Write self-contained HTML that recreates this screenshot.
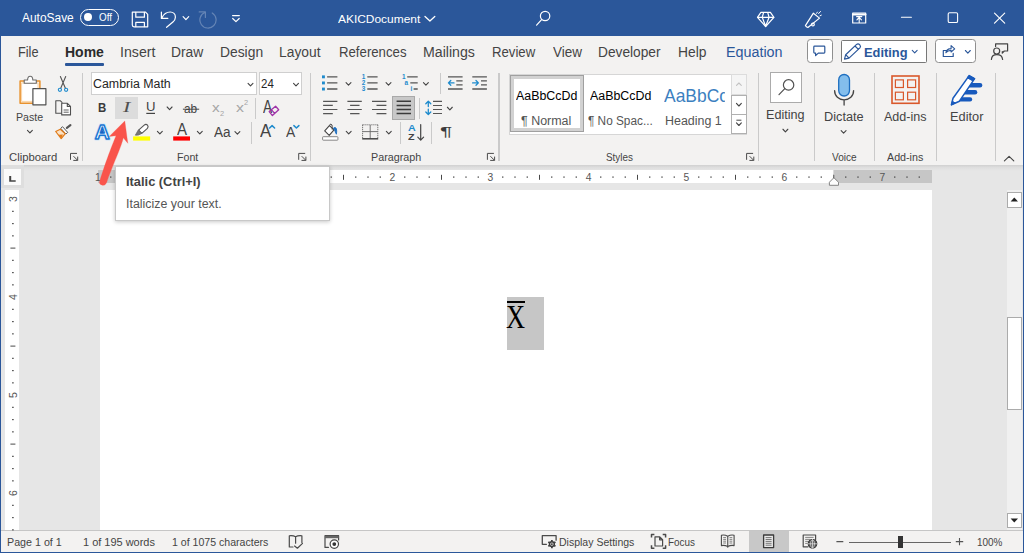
<!DOCTYPE html>
<html lang="en"><head><meta charset="utf-8"><title>AKICDocument - Word</title>
<style>
html,body{margin:0;padding:0;}
body{width:1024px;height:553px;overflow:hidden;position:relative;background:#e6e6e6;font-family:"Liberation Sans",sans-serif;}
.a{position:absolute;box-sizing:border-box;}
.t{position:absolute;white-space:nowrap;line-height:1;display:block;z-index:3;}
.z5{z-index:7;}
#titlebar{left:0;top:0;width:1024px;height:36px;background:#2b579a;}
#toggle{left:80.1px;top:8.9px;width:39px;height:16.7px;border:1.2px solid #fff;border-radius:9px;}
#knob{left:3.1px;top:3.1px;width:7.8px;height:7.8px;border-radius:50%;background:#fff;}
#tabs{left:0;top:36px;width:1024px;height:32px;background:#f3f2f1;}
#homeul{left:64.5px;top:27px;width:39.3px;height:3px;background:#2b579a;border-radius:1px;}
.btn{top:3.4px;height:24px;background:#fff;border:1px solid #8f8f8f;border-radius:3.5px;}
#btnComment{left:807px;width:25.5px;}
#btnEditing{left:840.8px;width:86.3px;top:4.1px;height:23.3px;border-color:#777;border-radius:1.5px;}
#btnShare{left:935.3px;width:41px;}
#ribbon{left:0;top:68px;width:1024px;height:96.7px;background:#f3f2f1;}
.box{background:#fff;border:1px solid #cfcfcf;top:4.3px;height:23.2px;}
#fontname{left:91px;width:165.5px;}
#fontsize{left:258.8px;width:43.4px;}
#italicbg{left:115.3px;top:28.8px;width:22.5px;height:22.6px;background:#dcdcdc;}
#justifybg{left:392.2px;top:28.2px;width:23px;height:23.6px;background:#c8c8c8;border:1px solid #a9a9a9;}
#gallery{left:508.8px;top:5.8px;width:238px;height:61px;background:#fff;border:1px solid #d6d6d6;}
#normalsel{left:0.5px;top:0.5px;width:73.3px;height:57px;border:1px solid #a0a0a0;box-shadow:inset 0 0 0 3px #d2d2d2;background:#fff;}
.gbtn{left:221.5px;width:15.5px;background:#fff;border:1px solid #b0b0b0;}
#gup{top:-0.5px;height:21px;background:#f5f5f5;border-color:#dcdcdc;}
#gdown{top:20px;height:20px;}
#gmore{top:39.5px;height:20px;}
#findbox{left:770.1px;top:4.1px;width:32.3px;height:31px;background:#fff;border:1px solid #ababab;}
.sep{position:absolute;width:1.2px;background:#cacaca;}
#ribshadow{left:0;top:164.7px;width:1024px;height:6.5px;background:linear-gradient(#d0d0d0,#dfdfdf 45%,#e6e6e6);z-index:1;}
#work{left:0;top:165px;width:1024px;height:365px;background:#e6e6e6;}
#hruler{left:98px;top:170.1px;width:833.5px;height:13px;background:#fff;z-index:2;}
#hrL{left:0;top:0;width:98.5px;height:13px;background:#c6c6c6;}
#hrR{left:735px;top:0;width:98.5px;height:13px;background:linear-gradient(90deg,#dcdcdc 0,#dcdcdc 1.2px,#c6c6c6 1.2px);}
#cornerbg{left:1.3px;top:165px;width:23.2px;height:23px;background:#dedede;z-index:2;}
#corner{left:4px;top:169px;width:16.9px;height:15.9px;background:#fafafa;z-index:2;}
#vruler{left:5.2px;top:190.2px;width:13.7px;height:340px;background:#fff;}
#page{left:100px;top:190.2px;width:831.5px;height:340px;background:#fff;}
#selection{left:506.8px;top:296.6px;width:37.3px;height:53px;background:#c6c6c6;}
#overbar{left:507px;top:301.4px;width:18.3px;height:1.8px;background:#000;z-index:4;}
#vscroll{left:1006.6px;top:190.2px;width:15.6px;height:340px;background:#f0f0f0;}
.sbtn{left:0;width:15.4px;height:15.7px;background:#fff;border:1px solid #ababab;}
#sup{top:1.8px;}
#sdown{top:322.6px;}
#sthumb{left:0;top:127.3px;width:15.4px;height:92.7px;background:#fff;border:1px solid #ababab;}
#tooltip{left:115.3px;top:166.2px;width:215px;height:54.8px;background:#fff;border:1px solid #c8c8c8;box-shadow:0 1px 4px rgba(0,0,0,.22);z-index:6;}
#status{left:0;top:530px;width:1024px;height:22px;background:#f3f2f1;border-top:1px solid #c6c6c6;}
#viewsel{left:749.3px;top:0;width:39.8px;height:21px;background:#c8c8c8;}
#zline{left:849px;top:10.6px;width:102px;height:1px;background:#666;}
#zthumb{left:898px;top:4.6px;width:4.8px;height:12px;background:#333;}
#frameL{left:0;top:36px;width:1.3px;height:517px;background:#2b579a;z-index:9;}
#frameR{left:1022.7px;top:36px;width:1.3px;height:517px;background:#2b579a;z-index:9;}
#frameB{left:0;top:551.5px;width:1024px;height:1.5px;background:#2b579a;z-index:9;}
svg{position:absolute;left:0;top:0;overflow:visible;z-index:4;}
svg.top{z-index:8;}

</style></head>
<body>
<div class="a" id="titlebar">
  <div class="a" id="toggle"><div class="a" id="knob"></div></div>
</div>
<div class="a" id="tabs">
  <div class="a" id="homeul"></div>
  <div class="a btn" id="btnComment"></div>
  <div class="a btn" id="btnEditing"></div>
  <div class="a btn" id="btnShare"></div>
</div>
<div class="a" id="ribbon">
  <div class="a box" id="fontname"></div>
  <div class="a box" id="fontsize"></div>
  <div class="a" id="italicbg"></div>
  <div class="a" id="justifybg"></div>
  <div class="a" id="gallery">
    <div class="a" id="normalsel"></div>
    <div class="a gbtn" id="gup"></div>
    <div class="a gbtn" id="gdown"></div>
    <div class="a gbtn" id="gmore"></div>
  </div>
  <div class="a" id="findbox"></div>
  <div class="sep" style="left:82px;top:4.5px;height:88px"></div>
  <div class="sep" style="left:255.3px;top:30px;height:21px"></div>
  <div class="sep" style="left:251.2px;top:54px;height:21.5px"></div>
  <div class="sep" style="left:310.2px;top:4.5px;height:88px"></div>
  <div class="sep" style="left:440px;top:5px;height:21px"></div>
  <div class="sep" style="left:418.6px;top:30px;height:21px"></div>
  <div class="sep" style="left:400.2px;top:54px;height:21.5px"></div>
  <div class="sep" style="left:431.2px;top:54px;height:21.5px"></div>
  <div class="sep" style="left:498.4px;top:4.5px;height:88px"></div>
  <div class="sep" style="left:757.8px;top:4.5px;height:88px"></div>
  <div class="sep" style="left:814.2px;top:4.5px;height:88px"></div>
  <div class="sep" style="left:873.6px;top:4.5px;height:88px"></div>
  <div class="sep" style="left:936.2px;top:4.5px;height:88px"></div>
  <div class="sep" style="left:995.1px;top:4.5px;height:88px"></div>
</div>
<div class="a" id="ribshadow"></div>
<div class="a" id="work"></div>
<div class="a" id="hruler"><div class="a" id="hrL"></div><div class="a" id="hrR"></div></div>
<div class="a" id="cornerbg"></div>
<div class="a" id="corner"></div>
<div class="a" id="vruler"></div>
<div class="a" id="page"></div>
<div class="a" id="selection"></div>
<div class="a" id="overbar"></div>
<div class="a" id="vscroll">
  <div class="a sbtn" id="sup"></div>
  <div class="a" id="sthumb"></div>
  <div class="a sbtn" id="sdown"></div>
</div>
<div class="a" id="tooltip"></div>
<div class="a" id="status">
  <div class="a" id="viewsel"></div>
  <div class="a" id="zline"></div>
  <div class="a" id="zthumb"></div>
</div>
<div class="a" id="frameL"></div><div class="a" id="frameR"></div><div class="a" id="frameB"></div>
<span class="t" style="left:22.34px;top:11.54px;font-size:12px;color:#fff;transform:scaleX(0.9945);transform-origin:0 0;">AutoSave</span>
<span class="t" style="left:99.09px;top:13.48px;font-size:10.3px;color:#fff;transform:scaleX(0.9565);transform-origin:0 0;">Off</span>
<span class="t" style="left:337.54px;top:14.41px;font-size:11.8px;color:#fff;transform:scaleX(1.0114);transform-origin:0 0;">AKICDocument</span>
<span class="t" style="left:17.90px;top:45.45px;font-size:14px;color:#444;transform:scaleX(0.9090);transform-origin:0 0;">File</span>
<span class="t" style="left:64.90px;top:45.45px;font-size:14px;color:#2b2b2b;font-weight:700;transform:scaleX(0.9996);transform-origin:0 0;">Home</span>
<span class="t" style="left:119.52px;top:45.45px;font-size:14px;color:#444;transform:scaleX(1.0118);transform-origin:0 0;">Insert</span>
<span class="t" style="left:171.07px;top:45.45px;font-size:14px;color:#444;transform:scaleX(0.9896);transform-origin:0 0;">Draw</span>
<span class="t" style="left:220.17px;top:45.45px;font-size:14px;color:#444;transform:scaleX(0.9884);transform-origin:0 0;">Design</span>
<span class="t" style="left:279.07px;top:45.45px;font-size:14px;color:#444;transform:scaleX(0.9876);transform-origin:0 0;">Layout</span>
<span class="t" style="left:338.92px;top:45.45px;font-size:14px;color:#444;transform:scaleX(0.9429);transform-origin:0 0;">References</span>
<span class="t" style="left:423.15px;top:45.45px;font-size:14px;color:#444;transform:scaleX(1.0116);transform-origin:0 0;">Mailings</span>
<span class="t" style="left:492.22px;top:45.45px;font-size:14px;color:#444;transform:scaleX(0.9417);transform-origin:0 0;">Review</span>
<span class="t" style="left:553.43px;top:45.45px;font-size:14px;color:#444;transform:scaleX(0.9632);transform-origin:0 0;">View</span>
<span class="t" style="left:598.48px;top:45.45px;font-size:14px;color:#444;transform:scaleX(0.9802);transform-origin:0 0;">Developer</span>
<span class="t" style="left:678.07px;top:45.45px;font-size:14px;color:#444;transform:scaleX(0.9871);transform-origin:0 0;">Help</span>
<span class="t" style="left:725.94px;top:45.45px;font-size:14px;color:#2b579a;transform:scaleX(1.0222);transform-origin:0 0;">Equation</span>
<span class="t" style="left:863.68px;top:45.70px;font-size:13px;color:#2b579a;font-weight:700;transform:scaleX(0.9885);transform-origin:0 0;">Editing</span>
<span class="t" style="left:16.41px;top:111.95px;font-size:11.4px;color:#444;transform:scaleX(0.9337);transform-origin:0 0;">Paste</span>
<span class="t" style="left:8.66px;top:152.98px;font-size:10.3px;color:#444;transform:scaleX(1.0980);transform-origin:0 0;">Clipboard</span>
<span class="t" style="left:92.72px;top:78.22px;font-size:12.5px;color:#262626;transform:scaleX(0.9904);transform-origin:0 0;">Cambria Math</span>
<span class="t" style="left:260.79px;top:78.22px;font-size:12.5px;color:#262626;transform:scaleX(0.9206);transform-origin:0 0;">24</span>
<span class="t" style="left:98.08px;top:101.43px;font-size:13.2px;color:#3b3b3b;font-weight:700;transform:scaleX(0.8689);transform-origin:0 0;">B</span>
<span class="t" style="left:122.58px;top:100.41px;font-size:14.8px;color:#505050;font-family:'Liberation Serif', serif;transform:scaleX(1.4838);transform-origin:0 0;font-style:italic;">I</span>
<span class="t" style="left:146.18px;top:101.33px;font-size:12.6px;color:#444;transform:scaleX(1.0444);transform-origin:0 0;">U</span>
<span class="t" style="left:184.33px;top:101.70px;font-size:13px;color:#444;transform:scaleX(0.9104);transform-origin:0 0;">ab</span>
<span class="t" style="left:212.05px;top:100.77px;font-size:13.5px;color:#a6a6a6;transform:scaleX(1.1418);transform-origin:0 0;">x</span>
<span class="t" style="left:219.71px;top:110.61px;font-size:6.6px;color:#a6a6a6;transform:scaleX(1.1286);transform-origin:0 0;">2</span>
<span class="t" style="left:236.23px;top:100.77px;font-size:13.5px;color:#a6a6a6;transform:scaleX(1.1764);transform-origin:0 0;">x</span>
<span class="t" style="left:244.31px;top:100.41px;font-size:6.6px;color:#a6a6a6;transform:scaleX(1.1286);transform-origin:0 0;">2</span>
<span class="t" style="left:262.73px;top:98.68px;font-size:17.8px;color:#444;transform:scaleX(0.7707);transform-origin:0 0;">A</span>
<span class="t" style="left:177.34px;top:121.79px;font-size:15.6px;color:#444;transform:scaleX(0.9652);transform-origin:0 0;">A</span>
<span class="t" style="left:213.84px;top:124.55px;font-size:14px;color:#444;transform:scaleX(0.9700);transform-origin:0 0;">Aa</span>
<span class="t" style="left:259.54px;top:123.42px;font-size:17.7px;color:#444;transform:scaleX(0.9454);transform-origin:0 0;">A</span>
<span class="t" style="left:285.54px;top:124.55px;font-size:14px;color:#444;transform:scaleX(0.9899);transform-origin:0 0;">A</span>
<span class="t" style="left:176.67px;top:152.98px;font-size:10.3px;color:#444;transform:scaleX(1.0326);transform-origin:0 0;">Font</span>
<span class="t" style="left:407.71px;top:124.38px;font-size:9px;color:#1e8bcd;font-weight:700;transform:scaleX(1.1883);transform-origin:0 0;">A</span>
<span class="t" style="left:408.24px;top:132.68px;font-size:9px;color:#444;font-weight:700;transform:scaleX(1.1921);transform-origin:0 0;">Z</span>
<span class="t" style="left:440.05px;top:124.70px;font-size:13px;color:#3b3b3b;transform:scaleX(1.7562);transform-origin:0 0;">¶</span>
<span class="t" style="left:370.86px;top:152.98px;font-size:10.3px;color:#444;transform:scaleX(1.0454);transform-origin:0 0;">Paragraph</span>
<span class="t" style="left:516.44px;top:90.34px;font-size:12px;color:#000;transform:scaleX(1.0327);transform-origin:0 0;">AaBbCcDd</span>
<span class="t" style="left:520.95px;top:114.64px;font-size:12px;color:#555;transform:scaleX(1.0379);transform-origin:0 0;">¶ Normal</span>
<span class="t" style="left:589.84px;top:90.34px;font-size:12px;color:#000;transform:scaleX(1.0327);transform-origin:0 0;">AaBbCcDd</span>
<span class="t" style="left:588.08px;top:114.64px;font-size:12px;color:#555;transform:scaleX(0.9839);transform-origin:0 0;">¶ No Spac...</span>
<span class="t" style="left:663.64px;top:86.56px;font-size:18.6px;color:#3c7fbf;transform:scaleX(0.9388);transform-origin:0 0;clip-path:inset(0 3.4px 0 0);">AaBbCc</span>
<span class="t" style="left:664.68px;top:114.64px;font-size:12px;color:#555;transform:scaleX(1.0382);transform-origin:0 0;">Heading 1</span>
<span class="t" style="left:606.11px;top:152.98px;font-size:10.3px;color:#444;transform:scaleX(0.9621);transform-origin:0 0;">Styles</span>
<span class="t" style="left:766.27px;top:108.64px;font-size:12px;color:#444;transform:scaleX(1.0517);transform-origin:0 0;">Editing</span>
<span class="t" style="left:824.16px;top:110.54px;font-size:12px;color:#444;transform:scaleX(1.0603);transform-origin:0 0;">Dictate</span>
<span class="t" style="left:831.64px;top:152.98px;font-size:10.3px;color:#444;transform:scaleX(0.9799);transform-origin:0 0;">Voice</span>
<span class="t" style="left:884.44px;top:110.54px;font-size:12px;color:#444;transform:scaleX(1.0448);transform-origin:0 0;">Add-ins</span>
<span class="t" style="left:887.04px;top:152.98px;font-size:10.3px;color:#444;transform:scaleX(1.0386);transform-origin:0 0;">Add-ins</span>
<span class="t" style="left:949.76px;top:110.54px;font-size:12px;color:#444;transform:scaleX(1.0659);transform-origin:0 0;">Editor</span>
<span class="t z5" style="left:126.48px;top:176.44px;font-size:12px;color:#444;font-weight:700;transform:scaleX(1.0703);transform-origin:0 0;">Italic (Ctrl+I)</span>
<span class="t z5" style="left:126.34px;top:198.44px;font-size:12px;color:#555;transform:scaleX(1.0321);transform-origin:0 0;">Italicize your text.</span>
<span class="t" style="left:389.49px;top:172.88px;font-size:10.3px;color:#555;">2</span>
<span class="t" style="left:487.41px;top:172.88px;font-size:10.3px;color:#555;">3</span>
<span class="t" style="left:585.73px;top:172.88px;font-size:10.3px;color:#555;">4</span>
<span class="t" style="left:683.40px;top:172.88px;font-size:10.3px;color:#555;">5</span>
<span class="t" style="left:781.44px;top:172.88px;font-size:10.3px;color:#555;">6</span>
<span class="t" style="left:879.41px;top:172.88px;font-size:10.3px;color:#555;">7</span>
<span class="t" style="left:95.06px;top:172.88px;font-size:10.3px;color:#555;">1</span>
<span class="t" style="left:12.95px;top:199.10px;font-size:10.5px;color:#555;transform:translate(-50%,-50%) rotate(-90deg);">3</span>
<span class="t" style="left:12.95px;top:297.20px;font-size:10.5px;color:#555;transform:translate(-50%,-50%) rotate(-90deg);">4</span>
<span class="t" style="left:12.95px;top:395.20px;font-size:10.5px;color:#555;transform:translate(-50%,-50%) rotate(-90deg);">5</span>
<span class="t" style="left:12.95px;top:493.20px;font-size:10.5px;color:#555;transform:translate(-50%,-50%) rotate(-90deg);">6</span>
<span class="t" style="left:7.45px;top:537.15px;font-size:11.4px;color:#444;transform:scaleX(0.9396);transform-origin:0 0;">Page 1 of 1</span>
<span class="t" style="left:83.42px;top:537.15px;font-size:11.4px;color:#444;transform:scaleX(0.9631);transform-origin:0 0;">1 of 195 words</span>
<span class="t" style="left:171.70px;top:537.15px;font-size:11.4px;color:#444;transform:scaleX(0.9283);transform-origin:0 0;">1 of 1075 characters</span>
<span class="t" style="left:558.71px;top:537.15px;font-size:11.4px;color:#444;transform:scaleX(0.9227);transform-origin:0 0;">Display Settings</span>
<span class="t" style="left:668.01px;top:537.15px;font-size:11.4px;color:#444;transform:scaleX(0.8704);transform-origin:0 0;">Focus</span>
<span class="t" style="left:977.22px;top:536.83px;font-size:10.6px;color:#444;transform:scaleX(0.9378);transform-origin:0 0;">100%</span>
<span class="t" style="left:506.38px;top:300.56px;font-size:33px;color:#000;font-family:'Liberation Serif', serif;transform:scaleX(0.7998);transform-origin:0 0;">X</span>
<svg width="100" height="170" viewBox="0 0 100 170" fill="none" stroke-linecap="round" stroke-linejoin="round">
  <!-- paste: clipboard -->
  <rect x="20.1" y="81" width="19.8" height="22.2" fill="#fdf0e0" stroke="#e8912d" stroke-width="1.5"/>
  <rect x="22" y="83" width="16" height="18.4" fill="#fff" stroke="#f8cf9e" stroke-width="0.9"/>
  <path d="M24.2 83.2 V80 H27.6 Q27.7 76.3 30.2 76.3 Q32.7 76.3 32.8 80 H36.3 V83.2 Z" fill="#fff" stroke="#6a6a6a" stroke-width="1.1"/>
  <rect x="32.9" y="88.7" width="13" height="16.1" fill="#fff" stroke="#505050" stroke-width="1.2"/>
  <path d="M27.45 130.35 L29.90 132.90 L32.35 130.35" stroke="#444" stroke-width="1.1" stroke-linecap="round" stroke-linejoin="round" fill="none"/>
  <!-- scissors -->
  <path d="M60.4 76.5 L65.4 88.2 M65.7 76.5 L60.7 88.2" stroke="#555" stroke-width="1.1"/>
  <circle cx="59.9" cy="89.8" r="1.6" stroke="#1e8bcd" stroke-width="1.1"/>
  <circle cx="66.1" cy="89.8" r="1.6" stroke="#1e8bcd" stroke-width="1.1"/>
  <!-- copy -->
  <path d="M61.3 113.2 H55.8 V100.7 H60.2 L62 102.4" stroke="#505050" stroke-width="1.1"/>
  <path d="M61.7 103.3 H67.4 L70.5 106.4 V114.9 H61.7 Z M67.3 103.5 V106.5 H70.3" stroke="#505050" stroke-width="1.1" fill="#fff"/>
  <path d="M64 110 H68.3 M64 112.2 H68.3" stroke="#505050" stroke-width="0.9"/>
  <!-- format painter -->
  <path d="M70.4 125.2 L66.9 127.8" stroke="#555" stroke-width="2.2"/>
  <path d="M62.8 127 L67.7 132.4 L65.9 134 L61 128.6 Z" fill="#fff" stroke="#555" stroke-width="1"/>
  <path d="M60.3 129.3 L55.7 131.5 L61.2 138.6 L65.3 133.7 Z" fill="#fbe3c6" stroke="#e07b1a" stroke-width="1.2"/>
  <path d="M58.6 134.8 L63 134.6 L61.2 138.2 Z" fill="#e07b1a" stroke="none"/>
  <!-- dialog launcher -->
  <path d="M70.50 159.80 V153.40 H77.00 M73.50 156.20 L77.50 160.20 M77.70 156.60 V160.40 H73.30" stroke="#4a4a4a" stroke-width="1" stroke-linecap="butt" stroke-linejoin="miter" fill="none"/>
</svg>
<svg width="320" height="170" viewBox="0 0 320 170" fill="none" stroke="#444" stroke-width="1.2" stroke-linecap="round" stroke-linejoin="round">
  <!-- dropdown chevrons in boxes -->
  <path d="M248.05 83.30 L250.50 85.85 L252.95 83.30" stroke="#444" stroke-width="1.1" stroke-linecap="round" stroke-linejoin="round" fill="none"/>
  <path d="M293.55 83.30 L296.00 85.85 L298.45 83.30" stroke="#444" stroke-width="1.1" stroke-linecap="round" stroke-linejoin="round" fill="none"/>
  <!-- U underline + chevron -->
  <path d="M146.3 113.4 H155" stroke-linecap="butt"/>
  <path d="M167.15 107.00 L169.60 109.55 L172.05 107.00" stroke="#444" stroke-width="1.1" stroke-linecap="round" stroke-linejoin="round" fill="none"/>
  <!-- ab strike -->
  <path d="M182.9 109.2 H199.2" stroke-width="1" stroke-linecap="butt"/>
  <!-- eraser -->
  <path d="M269.2 111.6 L275.6 106.3 L278.7 109.8 L272.4 115.6 Z M271.6 109.8 L274.6 113.4" stroke="#a033a8" stroke-width="1.3"/>
  <!-- text effects A -->
  <text x="102.1" y="138.9" text-anchor="middle" font-family="'Liberation Sans',sans-serif" font-weight="700" font-size="20.6" fill="#fff" stroke="#cfe4f7" stroke-width="3" stroke-linejoin="round">A</text>
  <text x="102.1" y="138.9" text-anchor="middle" font-family="'Liberation Sans',sans-serif" font-weight="700" font-size="20.6" fill="#fff" stroke="#1a76d2" stroke-width="1.5" stroke-linejoin="round">A</text>
  <path d="M100.6 133.2 L102.1 128.6 L103.6 133.2 Z" fill="#1a5fc0" stroke="none"/>
  <!-- highlighter -->
  <path d="M144.2 125.2 Q146 123.6 147.5 125.2 Q148.8 126.8 147.4 128.4 L141.8 133.4 L138.6 130.2 Z" stroke="#555" stroke-width="1.1" fill="#fff"/>
  <path d="M138.6 130.2 L141.8 133.4 L138.4 135 L135.4 135.2 L136.8 132.6 Z" fill="#777" stroke="#666" stroke-width="0.8"/>
  <rect x="133.1" y="136.4" width="17" height="4.2" fill="#ffff00" stroke="none"/>
  <path d="M157.40 131.30 L159.85 133.85 L162.30 131.30" stroke="#444" stroke-width="1.1" stroke-linecap="round" stroke-linejoin="round" fill="none"/>
  <!-- font color bar -->
  <rect x="173.2" y="136.4" width="16.8" height="4.2" fill="#f00" stroke="none"/>
  <path d="M197.35 131.30 L199.80 133.85 L202.25 131.30" stroke="#444" stroke-width="1.1" stroke-linecap="round" stroke-linejoin="round" fill="none"/>
  <!-- Aa chevron -->
  <path d="M234.95 131.55 L237.40 134.10 L239.85 131.55" stroke="#444" stroke-width="1.1" stroke-linecap="round" stroke-linejoin="round" fill="none"/>
  <!-- grow/shrink carets -->
  <path d="M269.6 128 L272.1 125.6 L274.6 128" stroke="#1e8bcd" stroke-width="1.5"/>
  <path d="M293.9 125.6 L296.4 128 L298.9 125.6" stroke="#1e8bcd" stroke-width="1.5"/>
  <!-- launcher -->
  <path d="M298.70 159.80 V153.40 H305.20 M301.70 156.20 L305.70 160.20 M305.90 156.60 V160.40 H301.50" stroke="#4a4a4a" stroke-width="1" stroke-linecap="butt" stroke-linejoin="miter" fill="none"/>
</svg>
<svg width="520" height="170" viewBox="0 0 520 170" fill="none" stroke="#555" stroke-width="1.3" stroke-linecap="butt" stroke-linejoin="round">
  <!-- bullets -->
  <g fill="#1e8bcd" stroke="none"><rect x="322" y="75.4" width="2.9" height="2.9"/><rect x="322" y="81.5" width="2.9" height="2.9"/><rect x="322" y="87.6" width="2.9" height="2.9"/></g>
  <path d="M327.1 76.8 H337.4 M327.1 82.9 H337.4 M327.1 89 H337.4"/>
  <path d="M346.05 82.65 L348.50 85.20 L350.95 82.65" stroke="#444" stroke-width="1.1" stroke-linecap="round" stroke-linejoin="round" fill="none"/>
  <!-- numbering -->
  <g font-family="'Liberation Sans',sans-serif" font-weight="700" font-size="6.4" fill="#1e8bcd" stroke="none">
    <text x="361.8" y="79.1">1</text><text x="361.8" y="85.2">2</text><text x="361.8" y="91.3">3</text>
    <text x="402" y="79.1">1</text><text x="404.6" y="85.2">a</text><text x="410.4" y="91.3">i</text>
  </g>
  <path d="M367.3 76.8 H377.6 M367.3 82.9 H377.6 M367.3 89 H377.6"/>
  <path d="M386.05 82.65 L388.50 85.20 L390.95 82.65" stroke="#444" stroke-width="1.1" stroke-linecap="round" stroke-linejoin="round" fill="none"/>
  <!-- multilevel -->
  <path d="M407.2 76.8 H417.7 M410.3 82.9 H417.7 M413.6 89 H417.7"/>
  <path d="M423.45 82.65 L425.90 85.20 L428.35 82.65" stroke="#444" stroke-width="1.1" stroke-linecap="round" stroke-linejoin="round" fill="none"/>
  <!-- decrease / increase indent -->
  <path d="M448 76.8 H462.6 M456.3 80.8 H462.6 M456.3 84.9 H462.6 M448 89 H462.6"/>
  <path d="M448.6 82.9 H454 M450.8 80.5 L448.4 82.9 L450.8 85.3" stroke="#1e8bcd" stroke-width="1.3" stroke-linecap="round"/>
  <path d="M472.3 76.8 H486.9 M481 80.8 H486.9 M481 84.9 H486.9 M472.3 89 H486.9"/>
  <path d="M472.6 82.9 H478.2 M476 80.5 L478.4 82.9 L476 85.3" stroke="#1e8bcd" stroke-width="1.3" stroke-linecap="round"/>
  <!-- align left/center/right -->
  <path d="M323.1 101.3 H337.4 M323.1 105.4 H332.8 M323.1 109.5 H337.4 M323.1 113.6 H332.8" stroke-width="1.2"/>
  <path d="M347.4 101.3 H361.8 M350.1 105.4 H359.5 M347.4 109.5 H361.8 M350.1 113.6 H359.5" stroke-width="1.2"/>
  <path d="M372 101.3 H386.4 M376.5 105.4 H386.4 M372 109.5 H386.4 M376.5 113.6 H386.4" stroke-width="1.2"/>
  <!-- justify -->
  <path d="M396.6 101.3 H411 M396.6 105.4 H411 M396.6 109.5 H411 M396.6 113.6 H411" stroke="#3b3b3b" stroke-width="1.5"/>
  <!-- line spacing -->
  <path d="M428.3 101.4 V106.6 M425.8 103.8 L428.3 101.3 L430.8 103.8 M428.3 109.2 V114.4 M425.8 112 L428.3 114.5 L430.8 112" stroke="#1e8bcd" stroke-width="1.3" stroke-linecap="round"/>
  <path d="M433 101.3 H442 M433 105.5 H442 M433 109.5 H442 M433 113.5 H442" stroke-width="1.2"/>
  <path d="M447.40 107.25 L449.85 109.80 L452.30 107.25" stroke="#444" stroke-width="1.1" stroke-linecap="round" stroke-linejoin="round" fill="none"/>
  <!-- shading -->
  <path d="M324.7 130.9 L329.4 125.7 L334 129.9 L329.2 135.4 Z" stroke="#444" stroke-width="1.1" fill="#fff"/>
  <path d="M329.6 125.6 Q329.8 123.8 331 124.2 Q332.3 124.6 332.2 126.4 V129.6" stroke="#444" stroke-width="1"/>
  <path d="M333.4 128.2 Q335.2 126.4 336.4 128.6 Q337 131 336.4 134.2 Q335 131.4 334.4 129.6 Z" fill="#1e6fc0" stroke="#1e6fc0" stroke-width="0.9"/>
  <rect x="322.6" y="136.7" width="15.3" height="3.5" rx="0.6" fill="#fff" stroke="#7a7a7a" stroke-width="0.9"/>
  <path d="M346.25 131.30 L348.70 133.85 L351.15 131.30" stroke="#444" stroke-width="1.1" stroke-linecap="round" stroke-linejoin="round" fill="none"/>
  <!-- borders -->
  <path d="M362.6 124.8 H377.8 M362.6 124.8 V138 M377.8 124.8 V138" stroke="#555" stroke-width="1" stroke-dasharray="1 1"/>
  <path d="M370.2 125 V138.4 M362.8 131.6 H377.6" stroke="#666" stroke-width="0.9"/>
  <path d="M362.2 138.8 H378.2" stroke="#444" stroke-width="1.5"/>
  <path d="M386.35 131.30 L388.80 133.85 L391.25 131.30" stroke="#444" stroke-width="1.1" stroke-linecap="round" stroke-linejoin="round" fill="none"/>
  <!-- sort arrow -->
  <path d="M420.7 124.6 V140 M417.8 137.2 L420.7 140.2 L423.6 137.2" stroke="#444" stroke-width="1.2" stroke-linecap="round"/>
  <!-- launcher -->
  <path d="M487.40 159.80 V153.40 H493.90 M490.40 156.20 L494.40 160.20 M494.60 156.60 V160.40 H490.20" stroke="#4a4a4a" stroke-width="1" stroke-linecap="butt" stroke-linejoin="miter" fill="none"/>
</svg>
<svg width="1024" height="170" viewBox="0 0 1024 170" fill="none" stroke="#444" stroke-width="1.2" stroke-linecap="round" stroke-linejoin="round">
  <!-- gallery scroll buttons -->
  <path d="M736.5 85.4 L738.9 83 L741.3 85.4" stroke="#c2c2c2" stroke-width="1.1"/>
  <path d="M736.45 103.45 L738.90 106.00 L741.35 103.45" stroke="#444" stroke-width="1.1" stroke-linecap="round" stroke-linejoin="round" fill="none"/>
  <path d="M736.4 120.2 H741.4" stroke-width="1" stroke-linecap="butt"/>
  <path d="M736.45 122.95 L738.90 125.50 L741.35 122.95" stroke="#444" stroke-width="1.1" stroke-linecap="round" stroke-linejoin="round" fill="none"/>
  <path d="M746.60 159.80 V153.40 H753.10 M749.60 156.20 L753.60 160.20 M753.80 156.60 V160.40 H749.40" stroke="#4a4a4a" stroke-width="1" stroke-linecap="butt" stroke-linejoin="miter" fill="none"/>
  <!-- find -->
  <circle cx="788.6" cy="84.9" r="5.2" stroke="#505050"/>
  <path d="M784.8 88.7 L779 94.6" stroke="#505050"/>
  <path d="M782.95 129.25 L785.40 131.80 L787.85 129.25" stroke="#444" stroke-width="1.1" stroke-linecap="round" stroke-linejoin="round" fill="none"/>
  <!-- dictate mic -->
  <rect x="838.7" y="74.5" width="10.8" height="21.5" rx="5.4" fill="#83beec" stroke="#1e6fc0" stroke-width="1.3"/>
  <path d="M834.6 90.6 C834.6 96.2 838.8 99.8 844.1 99.8 C849.4 99.8 853.6 96.2 853.6 90.6 M844.1 100 V105" stroke="#444" stroke-width="1.3"/>
  <path d="M841.15 130.55 L843.60 133.10 L846.05 130.55" stroke="#444" stroke-width="1.1" stroke-linecap="round" stroke-linejoin="round" fill="none"/>
  <!-- add-ins -->
  <rect x="892" y="76" width="27" height="27.3" stroke="#d9582b" stroke-width="1.6" stroke-linejoin="miter"/>
  <g stroke="#d9582b" stroke-width="1.2" stroke-linejoin="miter">
    <rect x="895.4" y="79.9" width="8" height="7.6"/><rect x="907.6" y="79.9" width="8" height="7.6"/>
    <rect x="895.4" y="92.2" width="8" height="7.6"/><rect x="907.6" y="92.2" width="8" height="7.6"/>
  </g>
  <!-- editor -->
  <g stroke="none" fill="#185abd">
    <rect x="966.5" y="82.9" width="15.8" height="4.5" rx="2.2"/>
    <rect x="962.5" y="90" width="14.8" height="4.4" rx="2.2"/>
    <rect x="958" y="97.2" width="14.2" height="4.3" rx="2.1"/>
  </g>
  <path d="M951.4 104.8 L953 98.2 L969.2 75.6 L974.6 78.6 L959.4 101.2 Z" fill="#fff" stroke="#185abd" stroke-width="1.5"/>
  <path d="M969.2 75.6 L974.6 78.6 L973 81 L967.6 78 Z" fill="#185abd" stroke="#185abd" stroke-width="1"/>
  <path d="M951.4 104.8 L952.3 101.2 L955 102.8 Z" fill="#185abd" stroke="#185abd" stroke-width="1"/>
  <!-- collapse ribbon -->
  <path d="M1004.4 160.8 L1009.1 156.3 L1013.8 160.8" stroke="#444" stroke-width="1.1"/>
</svg>
<svg width="1024" height="553" viewBox="0 0 1024 553" fill="none" stroke="none">
<g fill="#484848"><rect x="110.15" y="176.4" width="1.2" height="1.4"/><rect x="122.40" y="176.4" width="1.2" height="1.4"/><rect x="134.65" y="176.4" width="1.2" height="1.4"/><rect x="159.15" y="176.4" width="1.2" height="1.4"/><rect x="171.40" y="176.4" width="1.2" height="1.4"/><rect x="183.65" y="176.4" width="1.2" height="1.4"/><rect x="208.15" y="176.4" width="1.2" height="1.4"/><rect x="220.40" y="176.4" width="1.2" height="1.4"/><rect x="232.65" y="176.4" width="1.2" height="1.4"/><rect x="257.15" y="176.4" width="1.2" height="1.4"/><rect x="269.40" y="176.4" width="1.2" height="1.4"/><rect x="281.65" y="176.4" width="1.2" height="1.4"/><rect x="306.15" y="176.4" width="1.2" height="1.4"/><rect x="318.40" y="176.4" width="1.2" height="1.4"/><rect x="330.65" y="176.4" width="1.2" height="1.4"/><rect x="355.15" y="176.4" width="1.2" height="1.4"/><rect x="367.40" y="176.4" width="1.2" height="1.4"/><rect x="379.65" y="176.4" width="1.2" height="1.4"/><rect x="404.15" y="176.4" width="1.2" height="1.4"/><rect x="416.40" y="176.4" width="1.2" height="1.4"/><rect x="428.65" y="176.4" width="1.2" height="1.4"/><rect x="453.15" y="176.4" width="1.2" height="1.4"/><rect x="465.40" y="176.4" width="1.2" height="1.4"/><rect x="477.65" y="176.4" width="1.2" height="1.4"/><rect x="502.15" y="176.4" width="1.2" height="1.4"/><rect x="514.40" y="176.4" width="1.2" height="1.4"/><rect x="526.65" y="176.4" width="1.2" height="1.4"/><rect x="551.15" y="176.4" width="1.2" height="1.4"/><rect x="563.40" y="176.4" width="1.2" height="1.4"/><rect x="575.65" y="176.4" width="1.2" height="1.4"/><rect x="600.15" y="176.4" width="1.2" height="1.4"/><rect x="612.40" y="176.4" width="1.2" height="1.4"/><rect x="624.65" y="176.4" width="1.2" height="1.4"/><rect x="649.15" y="176.4" width="1.2" height="1.4"/><rect x="661.40" y="176.4" width="1.2" height="1.4"/><rect x="673.65" y="176.4" width="1.2" height="1.4"/><rect x="698.15" y="176.4" width="1.2" height="1.4"/><rect x="710.40" y="176.4" width="1.2" height="1.4"/><rect x="722.65" y="176.4" width="1.2" height="1.4"/><rect x="747.15" y="176.4" width="1.2" height="1.4"/><rect x="759.40" y="176.4" width="1.2" height="1.4"/><rect x="771.65" y="176.4" width="1.2" height="1.4"/><rect x="796.15" y="176.4" width="1.2" height="1.4"/><rect x="808.40" y="176.4" width="1.2" height="1.4"/><rect x="820.65" y="176.4" width="1.2" height="1.4"/><rect x="845.15" y="176.4" width="1.2" height="1.4"/><rect x="857.40" y="176.4" width="1.2" height="1.4"/><rect x="869.65" y="176.4" width="1.2" height="1.4"/><rect x="894.15" y="176.4" width="1.2" height="1.4"/><rect x="906.40" y="176.4" width="1.2" height="1.4"/><rect x="918.65" y="176.4" width="1.2" height="1.4"/></g>
<g fill="#484848"><rect x="147.00" y="174.8" width="1" height="5"/><rect x="245.00" y="174.8" width="1" height="5"/><rect x="343.00" y="174.8" width="1" height="5"/><rect x="441.00" y="174.8" width="1" height="5"/><rect x="539.00" y="174.8" width="1" height="5"/><rect x="637.00" y="174.8" width="1" height="5"/><rect x="735.00" y="174.8" width="1" height="5"/><rect x="833.00" y="174.8" width="1" height="5"/></g>
<path d="M833.9 175 V177.6" stroke="#8c8c8c" stroke-width="1.2" fill="none"/><path d="M829.4 185.3 V182.2 L833.9 177.7 L838.5 182.2 V185.3 Z" fill="#fdfdfd" stroke="#858585" stroke-width="1" stroke-linejoin="round"/>
<g fill="#4a4a4a"><rect x="12.1" y="210.75" width="1.6" height="1.2"/><rect x="12.1" y="223.00" width="1.6" height="1.2"/><rect x="12.1" y="235.25" width="1.6" height="1.2"/><rect x="12.1" y="259.75" width="1.6" height="1.2"/><rect x="12.1" y="272.00" width="1.6" height="1.2"/><rect x="12.1" y="284.25" width="1.6" height="1.2"/><rect x="12.1" y="308.75" width="1.6" height="1.2"/><rect x="12.1" y="321.00" width="1.6" height="1.2"/><rect x="12.1" y="333.25" width="1.6" height="1.2"/><rect x="12.1" y="357.75" width="1.6" height="1.2"/><rect x="12.1" y="370.00" width="1.6" height="1.2"/><rect x="12.1" y="382.25" width="1.6" height="1.2"/><rect x="12.1" y="406.75" width="1.6" height="1.2"/><rect x="12.1" y="419.00" width="1.6" height="1.2"/><rect x="12.1" y="431.25" width="1.6" height="1.2"/><rect x="12.1" y="455.75" width="1.6" height="1.2"/><rect x="12.1" y="468.00" width="1.6" height="1.2"/><rect x="12.1" y="480.25" width="1.6" height="1.2"/><rect x="12.1" y="504.75" width="1.6" height="1.2"/><rect x="12.1" y="517.00" width="1.6" height="1.2"/><rect x="12.1" y="529.25" width="1.6" height="1.2"/></g>
<g fill="#4a4a4a"><rect x="10.4" y="247.60" width="5" height="1"/><rect x="10.4" y="345.60" width="5" height="1"/><rect x="10.4" y="443.60" width="5" height="1"/></g>
<path d="M9.2 175.9 H11.2 V180.2 H15.7 V181.7 H9.2 Z" fill="#444"/>
<path d="M1010.6 201.6 L1014.3 197.6 L1018 201.6 Z" fill="#222"/>
<path d="M1010.6 518.6 L1014.3 522.6 L1018 518.6 Z" fill="#222"/>
</svg>
<svg width="1024" height="553" viewBox="0 0 1024 553" fill="none" stroke="#4a4a4a" stroke-width="1.2" stroke-linecap="round" stroke-linejoin="round">
  <!-- proofing book -->
  <path d="M293 547 H289.3 V535.8 Q293.2 535.4 295.6 536.8 Q298 535.4 301.9 535.8 V542.4 M295.6 537 V543.2"/>
  <path d="M294.6 546 L297.4 548.2 L302.5 543.4"/>
  <!-- macro recording -->
  <path d="M328.4 547.4 H325 V535.7 H338.6 V540" />
  <path d="M325 537 H338.6" stroke-width="2.4" stroke-linecap="butt" stroke="#666"/>
  <circle cx="334.3" cy="544.1" r="4.2" fill="#fff" stroke="#444" stroke-width="1.2"/>
  <circle cx="334.3" cy="544.1" r="1.9" fill="#333" stroke="none"/>
  <!-- display settings -->
  <path d="M546.4 544.3 H542.3 V535.7 H556.1 V540.2" stroke-width="1.3"/>
  <g stroke="#3a3a3a">
    <circle cx="551.9" cy="544.1" r="2.4" fill="#f3f2f1" stroke-width="1.5"/>
    <path d="M554.24 545.45 L555.45 546.15 M551.90 546.80 L551.90 548.20 M549.56 545.45 L548.35 546.15 M549.56 542.75 L548.35 542.05 M551.90 541.40 L551.90 540.00 M554.24 542.75 L555.45 542.05" stroke-width="1.7" stroke-linecap="butt"/>
    <circle cx="551.9" cy="544.1" r="0.9" fill="#222" stroke="none"/>
  </g>
  <!-- focus -->
  <path d="M651.5 537.4 V534.5 H654.4 M662.7 534.5 H665.6 V537.4 M665.6 545.3 V548.2 H662.7 M654.4 548.2 H651.5 V545.3" stroke-width="1.5" stroke-linecap="butt"/>
  <path d="M655 536.8 H659.8 L662.6 539.6 V546 H655 Z M659.6 537 V539.8 H662.4" stroke-width="1.2"/>
  <!-- read mode -->
  <path d="M727.75 536.2 Q724.6 534.4 721.4 535.2 V545.6 Q724.6 544.9 727.75 546.6 Q730.9 544.9 734.1 545.6 V535.2 Q730.9 534.4 727.75 536.2 V547.2" stroke-width="1.1"/>
  <path d="M723.2 537.6 H726 M723.2 539.4 H726 M723.2 541.2 H726 M723.2 543 H726 M729.5 537.6 H732.3 M729.5 539.4 H732.3 M729.5 541.2 H732.3 M729.5 543 H732.3" stroke="#777" stroke-width="0.9" stroke-linecap="butt"/>
  <!-- print layout -->
  <rect x="763.6" y="535" width="10" height="12.6" stroke="#3a3a3a" stroke-width="1.3" fill="#e9e9e9"/>
  <path d="M765.6 537.6 H771.6 M765.6 539.5 H771.6 M765.6 541.4 H771.6 M765.6 543.3 H771.6 M765.6 545.2 H771.6" stroke="#777" stroke-width="1" stroke-linecap="butt"/>
  <!-- web layout -->
  <path d="M808 546.8 H803.2 V535 H815.6 V539.4" stroke-width="1.2"/>
  <path d="M805.2 537.4 H813.6 M805.2 539.4 H810 M805.2 541.4 H808 M805.2 543.4 H807.4" stroke="#777" stroke-width="0.9" stroke-linecap="butt"/>
  <circle cx="812.5" cy="543.8" r="4.3" fill="#555" stroke="#333" stroke-width="1.1"/>
  <path d="M808.4 543.8 H816.6 M812.5 539.7 V547.9" stroke="#ddd" stroke-width="0.8"/>
  <ellipse cx="812.5" cy="543.8" rx="2" ry="4.1" stroke="#ddd" stroke-width="0.7"/>
  <!-- zoom -/+ -->
  <path d="M836.4 541.6 H843.3 M955.8 541.6 H963.2 M959.5 537.9 V545.3" stroke="#555" stroke-width="1.1" stroke-linecap="butt"/>
</svg>
<svg width="1024" height="70" viewBox="0 0 1024 70" fill="none" stroke="#2b579a" stroke-width="1.2" stroke-linecap="round" stroke-linejoin="round">
  <!-- comment -->
  <path d="M814.6 46.2 H824 Q824.8 46.2 824.8 47 V52.3 Q824.8 53.1 824 53.1 H818.3 L815.6 55.6 V53.1 H814.6 Q813.8 53.1 813.8 52.3 V47 Q813.8 46.2 814.6 46.2 Z"/>
  <!-- pencil -->
  <path d="M844.5 59.1 L845.7 54.7 L856.6 44.4 Q858.2 43.2 859.8 44.8 Q861.2 46.4 859.9 47.9 L849 58.1 Z M855 46 L858.4 49.4 M845.9 54.9 L848.8 57.9"/>
  <path d="M912.25 50.35 L914.70 52.90 L917.15 50.35" stroke="#2b579a" stroke-width="1.1" stroke-linecap="round" stroke-linejoin="round" fill="none"/>
  <!-- share -->
  <path d="M946.6 50.5 H943.3 V56.5 H953.2 V53.4"/>
  <path d="M945.9 52.7 C946.3 50 948.2 48.6 951.1 48.6 V45.6 L954.7 48.8 L951.1 52 V50.4 C948.8 50.4 947.2 51 945.9 52.7 Z" stroke-width="1.1"/>
  <path d="M965.40 50.50 L967.85 53.05 L970.30 50.50" stroke="#2b579a" stroke-width="1.1" stroke-linecap="round" stroke-linejoin="round" fill="none"/>
  <!-- person w/ bubble -->
  <g stroke="#444" stroke-width="1.2">
    <circle cx="996.7" cy="51" r="3"/>
    <path d="M991.4 59.5 C991.6 56.2 993.8 54.6 996.9 54.6 C1000 54.6 1002.3 56.2 1002.6 59.5"/>
    <path d="M995.6 46.5 V43.8 H1007.6 V51 H1004.3 L1002.3 53.2 V51.6"/>
  </g>
</svg>
<svg width="1024" height="36" viewBox="0 0 1024 36" fill="none" stroke="#fff" stroke-width="1.2" stroke-linecap="round" stroke-linejoin="round">
  <!-- save -->
  <path d="M132.3 12.2 H145.6 L147.7 14.3 V26.8 H134 Q132.3 26.8 132.3 25.1 Z"/>
  <path d="M135.8 12.4 V17.2 H144.4 V12.4"/>
  <path d="M135.8 26.6 V22.3 H144.4 V26.6"/>
  <!-- undo -->
  <path d="M161.4 12 V18.4 H167.8"/>
  <path d="M161.9 17.9 C163.6 14.2 166.6 12 170.2 12 C173.3 12 175.4 14.3 175.4 17.2 C175.4 19.4 174.4 20.7 172.9 22 L166.6 27.3"/>
  <path d="M183.1 16.7 L185.9 19.6 L188.7 16.7"/>
  <!-- redo (disabled) -->
  <g opacity="0.27">
    <path d="M199.2 11.9 H205.4 V17.4"/>
    <path d="M205 12.4 A8.1 8.1 0 1 0 212.2 13" />
  </g>
  <!-- customize -->
  <path d="M232.6 15.6 H239.3" stroke-width="1.3"/>
  <path d="M232.7 18.5 L235.95 21.6 L239.2 18.5"/>
  <!-- title chevron -->
  <path d="M425 16.5 L429.9 21 L434.8 16.5" stroke-width="1.3"/>
  <!-- search -->
  <circle cx="545.1" cy="16" r="4.7"/>
  <path d="M541.6 19.6 L536.6 25.1"/>
  <!-- diamond -->
  <path d="M760.9 12.4 H770.4 L773.9 17.3 L765.65 26.5 L757.5 17.3 Z"/>
  <path d="M757.7 17.3 H773.7 M763.6 12.5 L762.2 17.3 L765.65 26.2 L769.1 17.3 L767.7 12.5"/>
  <!-- megaphone -->
  <path d="M813.4 13.2 L819.5 18.1 L808.2 27.3 Q806.3 27.6 805.4 25.6 Z"/>
  <circle cx="812.9" cy="24.6" r="1.4"/>
  <path d="M816.6 13.3 L817.4 12.1 M818.6 13.6 L820.5 11.5 M820 15.8 L821.3 15.2" stroke-width="1"/>
  <!-- ribbon display -->
  <rect x="852.7" y="13.2" width="13" height="9.8"/>
  <path d="M852.7 14.6 H865.7" stroke-width="1.6"/>
  <path d="M859.2 22.4 V17.6 M856.9 19.8 L859.2 17.5 L861.5 19.8 M856.6 16.6 H861.8" stroke-width="1.1"/>
  <!-- window controls -->
  <path d="M901.4 17.3 H911.4" stroke-width="1.1"/>
  <rect x="948.2" y="12.7" width="9.4" height="9.8" rx="1.3" stroke-width="1.1"/>
  <path d="M994.5 13.1 L1004.7 23.1 M1004.7 13.1 L994.5 23.1" stroke-width="1.15"/>
</svg>
<svg class="top" width="1024" height="553" viewBox="0 0 1024 553">
  <path d="M124.8 121 L127.8 143.3 L123.3 137.8 C121.6 146 115.6 158 106.8 182 Q105.5 185.7 102.5 185.3 Q99 184.5 99.5 182 C107.6 156 113.2 143 116 135.7 L109.3 136.4 Z" fill="#f9544b" stroke="#f9544b" stroke-width="0.3" stroke-linejoin="round"/>
</svg>


</body></html>
